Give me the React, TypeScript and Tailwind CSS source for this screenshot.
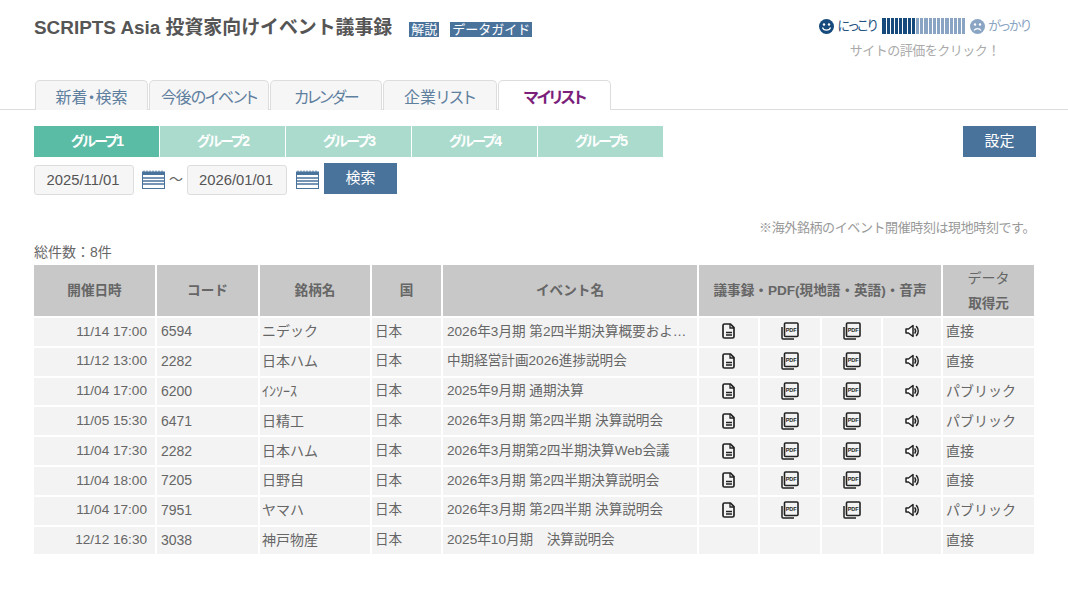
const tabs = ["新着・検索", "今後のイベント", "カレンダー", "企業リスト", "マイリスト"];
const tabWidths = ["w-[113px]", "w-[120px]", "w-[112px]", "w-[114px]", "w-[113px]"];
const tabTracking = ["tracking-normal", "tracking-[-1.2px]", "tracking-[-2px]", "tracking-normal", "tracking-[-2px]"];
const groups = ["グループ1", "グループ2", "グループ3", "グループ4", "グループ5"];

const rows = [
  { date: "11/14 17:00", code: "6594", name: "ニデック", event: "2026年3月期 第2四半期決算概要および説明会", icons: true, source: "直接" },
  { date: "11/12 13:00", code: "2282", name: "日本ハム", event: "中期経営計画2026進捗説明会", icons: true, source: "直接" },
  { date: "11/04 17:00", code: "6200", name: "ｲﾝｿｰｽ", event: "2025年9月期 通期決算", icons: true, source: "パブリック" },
  { date: "11/05 15:30", code: "6471", name: "日精工", event: "2026年3月期 第2四半期 決算説明会", icons: true, source: "パブリック" },
  { date: "11/04 17:30", code: "2282", name: "日本ハム", event: "2026年3月期第2四半期決算Web会議", icons: true, source: "直接" },
  { date: "11/04 18:00", code: "7205", name: "日野自", event: "2026年3月期 第2四半期決算説明会", icons: true, source: "直接" },
  { date: "11/04 17:00", code: "7951", name: "ヤマハ", event: "2026年3月期 第2四半期 決算説明会", icons: true, source: "パブリック" },
  { date: "12/12 16:30", code: "3038", name: "神戸物産", event: "2025年10月期　決算説明会", icons: false, source: "直接" },
];

const DocIcon = () => (
  <svg width="14" height="16" viewBox="0 0 14 16" className="mx-auto block" fill="none" stroke="#222" strokeWidth="1.7">
    <path d="M2.5 1h6l3.5 3.7V13.5a1.5 1.5 0 0 1-1.5 1.5h-8A1.5 1.5 0 0 1 1 13.5v-11A1.5 1.5 0 0 1 2.5 1z" />
    <path d="M8 1v4h4M4 9.5h6M4 12h6" strokeWidth="1.3" />
  </svg>
);

const PdfIcon = () => (
  <svg width="18" height="18" viewBox="0 0 18 18" className="mx-auto block">
    <path d="M1 5v11a1 1 0 0 0 1 1h11" fill="none" stroke="#222" strokeWidth="1.5" />
    <rect x="3.5" y="1" width="13.5" height="13.5" rx="1" fill="none" stroke="#222" strokeWidth="1.6" />
    <text x="10.2" y="9.8" textAnchor="middle" fontSize="5.5" fontWeight="700" fill="#222" fontFamily="'Liberation Sans', sans-serif">PDF</text>
  </svg>
);

const SpeakerIcon = () => (
  <svg width="15" height="14" viewBox="0 0 15 14" className="mx-auto block" fill="none">
    <path d="M1 5h2.5L8 1.5v11L3.5 9H1z" stroke="#222" strokeWidth="1.5" fill="#fff" strokeLinejoin="round" />
    <path d="M10 5c.8 1.2.8 2.8 0 4" stroke="#222" strokeWidth="1.6" strokeLinecap="round" />
    <path d="M11.5 2.5c2.2 2.6 2.2 6.4 0 9" stroke="#222" strokeWidth="1.6" strokeLinecap="round" />
  </svg>
);

const CalendarIcon = () => (
  <svg width="23" height="19" viewBox="0 0 23 19" className="shrink-0">
    <path d="M2 0.5v2M5 0.5v2M8 0.5v2M11 0.5v2M14 0.5v2M17 0.5v2M20 0.5v2" stroke="#4a739c" strokeWidth="1" />
    <rect x="0.5" y="2" width="22" height="16.5" fill="#fff" stroke="#4a739c" />
    <rect x="0.5" y="2" width="22" height="3" fill="#4a739c" />
    <path d="M1 8h21M1 11h21M1 14h21" stroke="#4a739c" strokeWidth="1.4" />
  </svg>
);

const Face = ({ color, sad }: { color: string; sad?: boolean }) => (
  <svg width="15" height="15" viewBox="0 0 15 15" className="shrink-0">
    <circle cx="7.5" cy="7.5" r="7.5" fill={color} />
    <circle cx="5" cy="5.5" r="1.2" fill="#fff" />
    <circle cx="10" cy="5.5" r="1.2" fill="#fff" />
    <path d={sad ? "M4 11.5c1.5-2.5 5.5-2.5 7 0" : "M3.5 8.5c1 3.5 7 3.5 8 0"} fill="none" stroke="#fff" strokeWidth="1.2" />
  </svg>
);

const DateBox = ({ value }: { value: string }) => (
  <div className="w-[100px] h-[30px] flex items-center justify-center pr-[2px] bg-[#f6f6f6] border border-[#dddddd] rounded-[3px] text-[14.8px] text-[#555555]">
    {value}
  </div>
);

const th = "bg-[#c8c8c8] text-[13.6px] font-bold text-[#666666] text-center align-middle p-0";
const thCell = `${th} pt-[2px]`;
const td = "bg-[#f3f3f3] text-[#666666] align-middle p-0 pb-[1px] h-[27.8px] leading-none";

export default function App() {
  return (
    <div className="w-[1068px] h-[600px] bg-white overflow-hidden" style={{ fontFamily: '"Liberation Sans", "Noto Sans CJK JP", sans-serif' }}>
      <div className="h-[80px] flex justify-between pl-[34px] pr-[38px]">
        <div className="flex items-center h-[56px] gap-[17px]">
          <h1 className="text-[18.9px] font-bold text-[#555555]">SCRIPTS Asia 投資家向けイベント議事録</h1>
          <div className="flex gap-[11px] pt-[2px]">
            <span className="bg-[#4a739c] text-white text-[13px] leading-[15px] px-[2px]">解説</span>
            <span className="bg-[#4a739c] text-white text-[13px] leading-[15px] px-[2px]">データガイド</span>
          </div>
        </div>
        <div className="pt-[17px] flex flex-col items-center">
          <div className="flex items-center h-[18px] text-[13px] [font-feature-settings:'palt']">
            <Face color="#164a7c" />
            <span className="ml-[3px] text-[#25527f] tracking-[-1.5px]">にっこり</span>
            <div className="ml-[6px] w-[83px] h-[16px] flex gap-px">
              {Array.from({ length: 20 }).map((_, i) => (
                <div key={i} className={`flex-1 ${i < 8 ? "bg-[#164a7c]" : "bg-[#8aa5c3]"}`} />
              ))}
            </div>
            <span className="ml-[5px]"><Face color="#8aa5c3" sad /></span>
            <span className="ml-[3px] text-[#8aa5c3] tracking-[-1.2px]">がっかり</span>
          </div>
          <div className="mt-[7px] text-[13px] leading-[18px] text-[#aaaaaa] tracking-[-0.5px]">サイトの評価をクリック！</div>
        </div>
      </div>

      <div className="h-[30px] border-b border-[#dddddd] pl-[35px] flex gap-px">
        {tabs.map((tab, i) => (
          <div
            key={tab}
            className={`${tabWidths[i]} ${tabTracking[i]} h-[30px] rounded-t-[5px] border border-b-0 border-[#dddddd] flex items-center justify-center text-[16px] pt-[4px] [font-feature-settings:'palt'] ${
              i === 4 ? "bg-white text-[#7b1f7b] font-bold" : "bg-[#f6f6f6] text-[#5f7f9f]"
            }`}
          >
            {tab}
          </div>
        ))}
      </div>

      <div className="mt-[16px] h-[31px] pl-[34px] pr-[32px] flex justify-between">
        <div className="flex gap-px">
          {groups.map((g, i) => (
            <div
              key={g}
              className={`w-[125px] flex items-center justify-center text-[14px] font-bold text-white tracking-[-1.8px] [font-feature-settings:'palt'] ${i === 0 ? "bg-[#5bbca6]" : "bg-[#aadbcd]"}`}
            >
              {g}
            </div>
          ))}
        </div>
        <div className="w-[73px] bg-[#4a739c] text-white text-[15px] flex items-center justify-center">設定</div>
      </div>

      <div className="mt-[6px] pl-[34px] flex items-start">
        <div className="mt-[2px]"><DateBox value="2025/11/01" /></div>
        <div className="ml-[8px] mt-[7px]"><CalendarIcon /></div>
        <span className="w-[22px] text-center text-[14px] leading-[30px] mt-[1px] text-[#666666]">～</span>
        <div className="mt-[2px]"><DateBox value="2026/01/01" /></div>
        <div className="ml-[9px] mt-[7px]"><CalendarIcon /></div>
        <div className="ml-[5px] w-[73px] h-[31px] bg-[#4a739c] text-white text-[15px] flex items-center justify-center">検索</div>
      </div>

      <div className="mt-[24px] pr-[33px] text-right text-[13px] leading-[18px] text-[#999999] tracking-[-0.4px]">※海外銘柄のイベント開催時刻は現地時刻です。</div>
      <div className="mt-[6px] pl-[34px] text-[14px] leading-[18px] text-[#666666]">総件数：8件</div>

      <div className="pl-[32px] mt-[2px]">
        <table className="w-[1004px] table-fixed border-separate border-spacing-[2px]">
          <colgroup>
            <col className="w-[121px]" />
            <col className="w-[101px]" />
            <col className="w-[110px]" />
            <col className="w-[69px]" />
            <col className="w-[254px]" />
            <col className="w-[59px]" />
            <col className="w-[60px]" />
            <col className="w-[59px]" />
            <col className="w-[58px]" />
            <col className="w-[91px]" />
          </colgroup>
          <thead>
            <tr className="h-[51px]">
              <th className={thCell}>開催日時</th>
              <th className={thCell}>コード</th>
              <th className={thCell}>銘柄名</th>
              <th className={thCell}>国</th>
              <th className={thCell}>イベント名</th>
              <th className={thCell} colSpan={4}>議事録・PDF(現地語・英語)・音声</th>
              <th className={`${th} leading-[25px]`}>
                <span className="text-[14px] font-normal">データ</span>
                <br />
                取得元
              </th>
            </tr>
          </thead>
          <tbody>
            {rows.map((row, i) => (
              <tr key={i}>
                <td className={`${td} text-right pr-[8px] text-[13.6px]`}>{row.date}</td>
                <td className={`${td} pl-[4px] text-[14px]`}>{row.code}</td>
                <td className={`${td} pl-[2px] text-[14px]`}>{row.name}</td>
                <td className={`${td} pl-[3px] text-[13.6px]`}>日本</td>
                <td className={`${td} pl-[4px] pr-[6px] text-[13.6px] truncate`}>{row.event}</td>
                <td className={td}>{row.icons && <DocIcon />}</td>
                <td className={td}>{row.icons && <PdfIcon />}</td>
                <td className={td}>{row.icons && <PdfIcon />}</td>
                <td className={td}>{row.icons && <SpeakerIcon />}</td>
                <td className={`${td} pl-[3px] text-[14px]`}>{row.source}</td>
              </tr>
            ))}
          </tbody>
        </table>
      </div>
    </div>
  );
}
